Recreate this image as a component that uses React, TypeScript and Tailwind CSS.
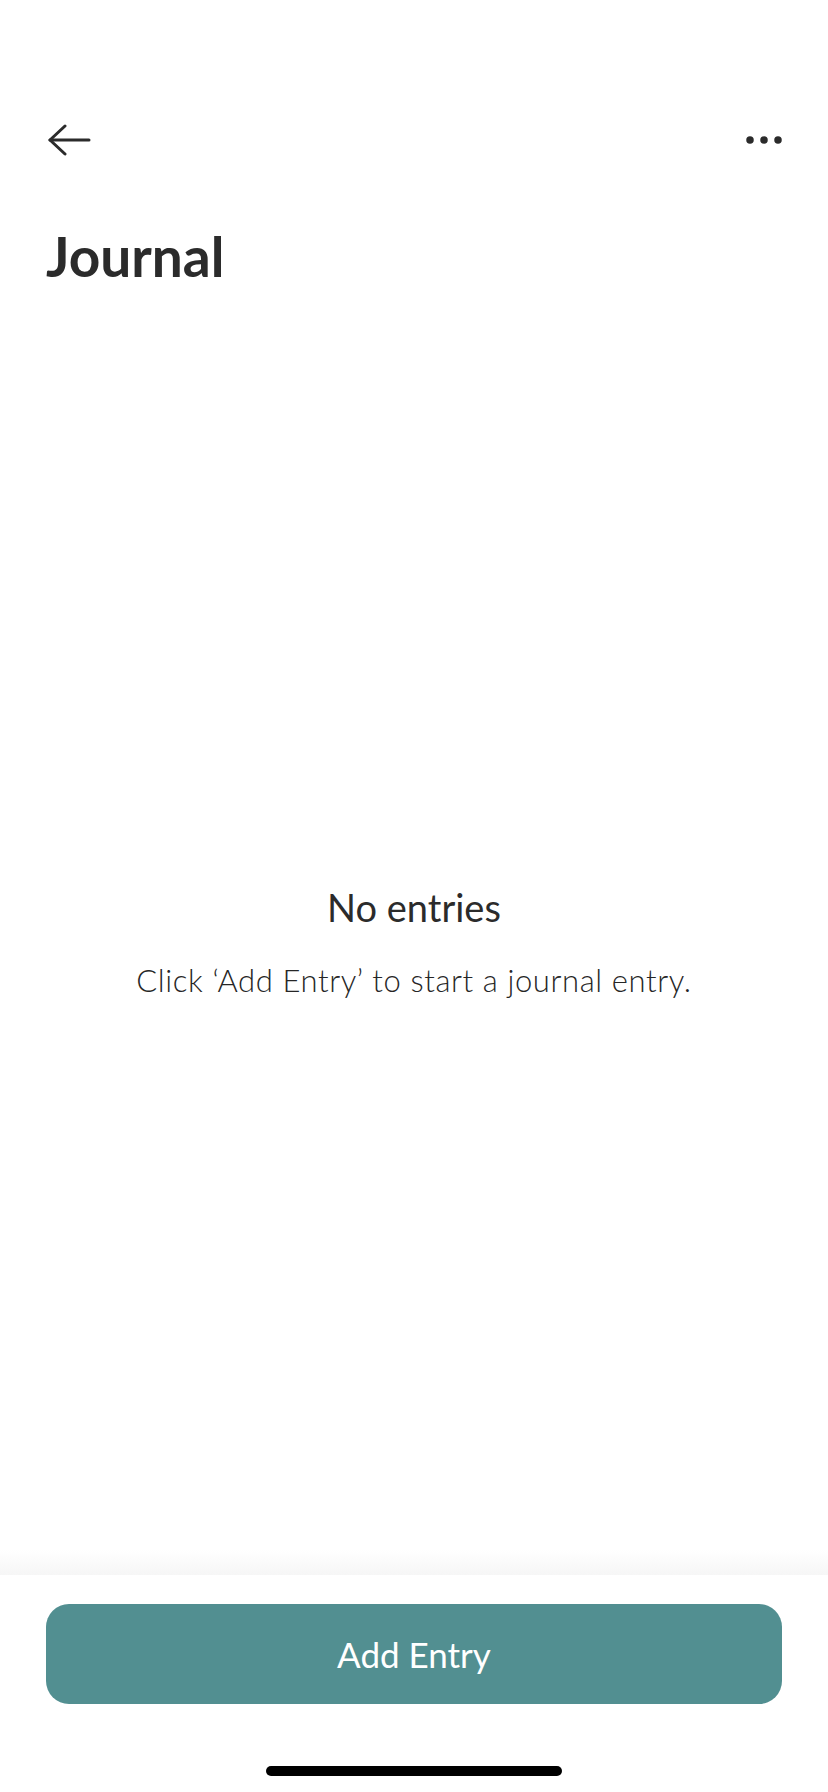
import React from "react";

const BackArrow = () => (
  <svg width="43" height="32" viewBox="0 0 43 32" fill="none" stroke="#2b2b2b" strokeWidth="3" strokeLinecap="round" strokeLinejoin="round">
    <path d="M2 16H41" />
    <path d="M17 2L2 16L17 30" />
  </svg>
);

const MoreDots = () => (
  <svg width="36" height="8" viewBox="0 0 36 8" fill="#2b2b2b">
    <circle cx="4" cy="4" r="3.75" />
    <circle cx="18" cy="4" r="3.75" />
    <circle cx="32" cy="4" r="3.75" />
  </svg>
);

const App = () => {
  return (
    <div
      className="flex h-[1792px] w-full flex-col bg-white text-[#2b2b2b]"
      style={{ fontFamily: "Lato, 'Open Sans', sans-serif" }}
    >
      {/* Top bar */}
      <header className="mt-[112px] flex h-[56px] items-center justify-between pl-[48px] pr-[46px]">
        <button className="flex items-center">
          <BackArrow />
        </button>
        <button className="flex items-center">
          <MoreDots />
        </button>
      </header>

      <h1 className="mt-[61px] px-[46px] text-[55px] font-bold leading-none">Journal</h1>

      {/* Empty state */}
      <main className="flex flex-1 flex-col items-center justify-center pt-[50px]">
        <p className="text-[38px] leading-none">No entries</p>
        <p className="mt-[39px] text-[31px] font-light leading-none tracking-[0.6px] text-[#262626]">
          Click ‘Add Entry’ to start a journal entry.
        </p>
      </main>

      {/* Bottom action */}
      <div className="h-[25px] bg-linear-to-b from-white to-[#f6f6f6]"></div>
      <footer className="flex h-[217px] flex-col bg-white">
        <button className="mx-[46px] mt-[29px] flex h-[100px] items-center justify-center rounded-[23px] bg-[#528f91] text-[35px] leading-none text-white">
          Add Entry
        </button>
        <div className="mx-auto mt-[62px] h-[10px] w-[296px] rounded-full bg-black"></div>
      </footer>
    </div>
  );
};

export default App;
